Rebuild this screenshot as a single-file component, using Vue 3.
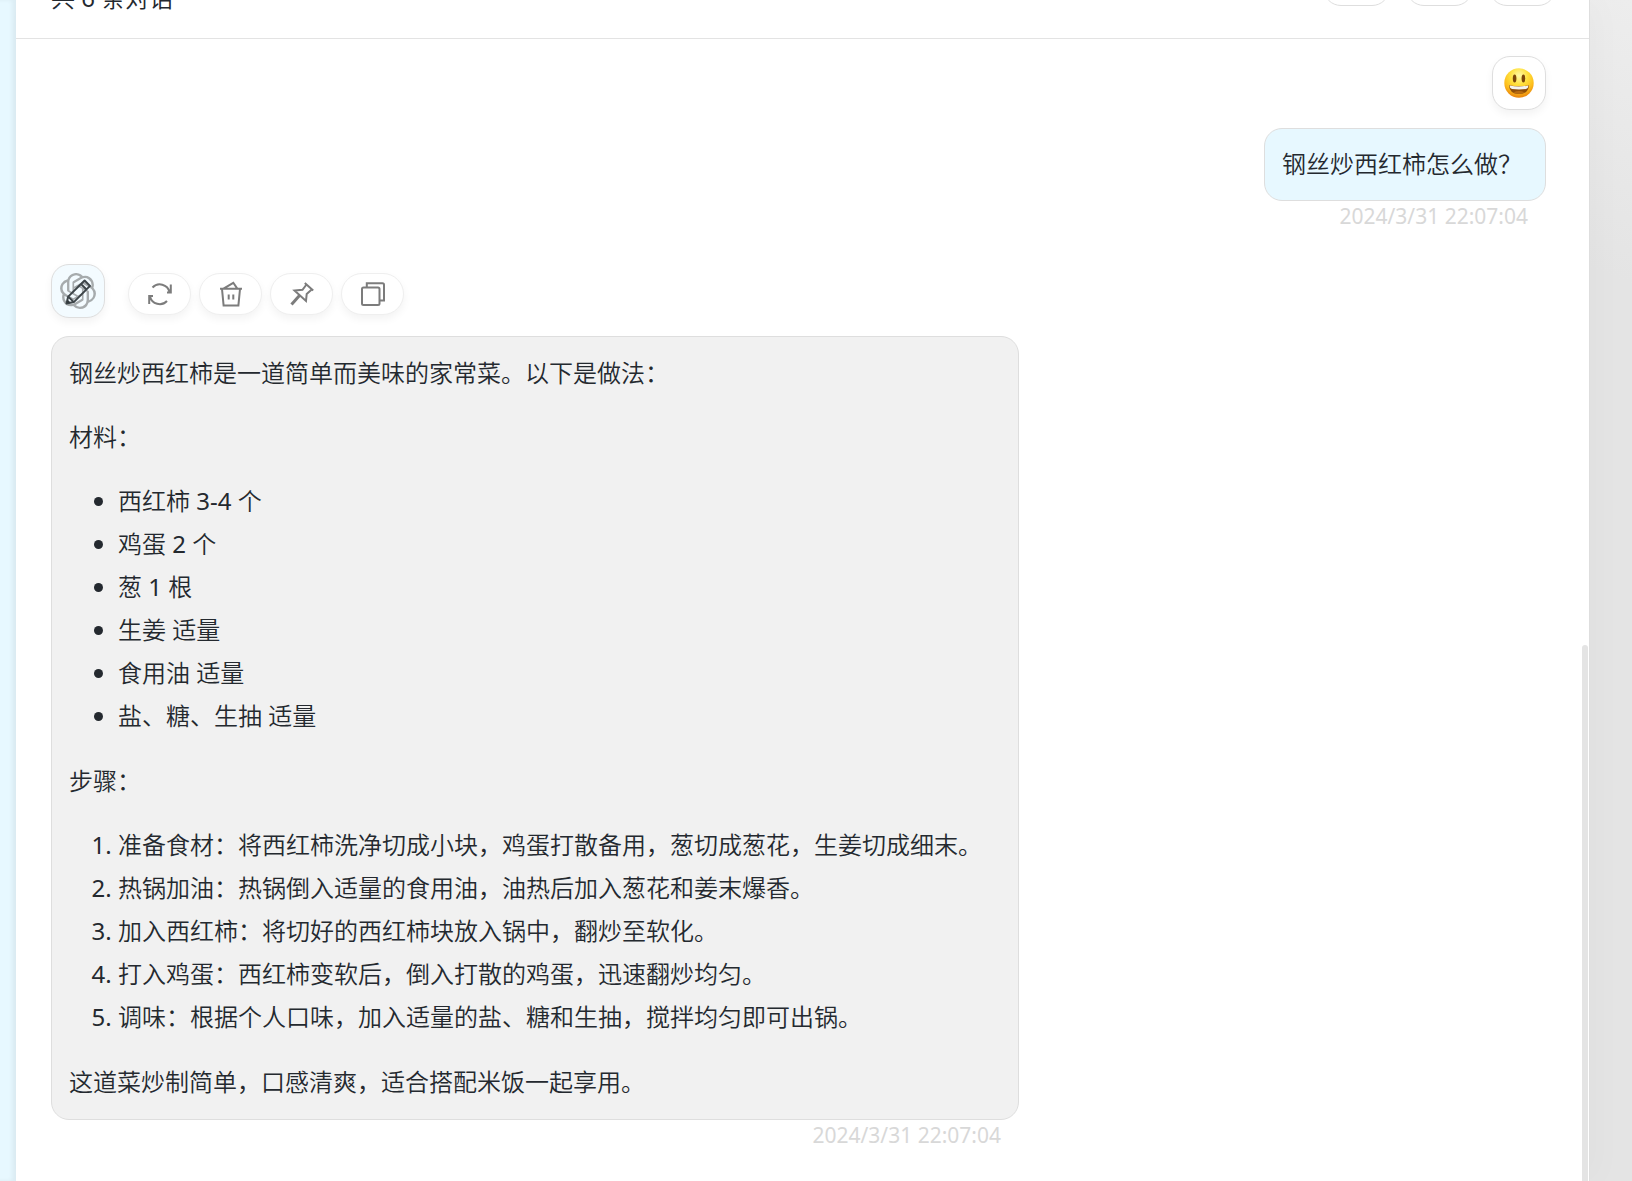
<script setup>
const ingredients = ['西红柿 3-4 个', '鸡蛋 2 个', '葱 1 根', '生姜 适量', '食用油 适量', '盐、糖、生抽 适量']
const steps = [
  '准备食材：将西红柿洗净切成小块，鸡蛋打散备用，葱切成葱花，生姜切成细末。',
  '热锅加油：热锅倒入适量的食用油，油热后加入葱花和姜末爆香。',
  '加入西红柿：将切好的西红柿块放入锅中，翻炒至软化。',
  '打入鸡蛋：西红柿变软后，倒入打散的鸡蛋，迅速翻炒均匀。',
  '调味：根据个人口味，加入适量的盐、糖和生抽，搅拌均匀即可出锅。',
]
const time = '2024/3/31 22:07:04'
const headerActions = ['重命名', '分享', '全屏']
</script>

<template>
  <div class="page">
    <aside class="sidebar"></aside>
    <main class="window">
      <header class="header">
        <span class="subtitle">共 6 条对话</span>
        <div class="header-actions">
          <button v-for="name in headerActions" :key="name" class="header-button" type="button" :aria-label="name"></button>
        </div>
      </header>

      <section class="chat">
        <article class="message user">
          <div class="avatar">
            <svg width="30" height="30" viewBox="0 0 30 30" role="img" aria-label="笑脸">
              <defs>
                <radialGradient id="face" cx=".5" cy=".25" r=".75">
                  <stop offset="0" stop-color="#fff9a8" />
                  <stop offset=".4" stop-color="#ffe03c" />
                  <stop offset=".72" stop-color="#fdbd1c" />
                  <stop offset="1" stop-color="#e8820c" />
                </radialGradient>
              </defs>
              <circle cx="15" cy="15" r="14.7" fill="url(#face)" />
              <ellipse cx="10.6" cy="10.6" rx="1.8" ry="4" fill="#7b4508" />
              <ellipse cx="19.4" cy="10.6" rx="1.8" ry="4" fill="#7b4508" />
              <path d="M5 17.2Q15 19.5 25 17.2Q24.5 26 15 26Q5.500 26 5 17.200Z" fill="#8f4e08" />
              <path d="M5.700 17.400Q15 19.500 24.300 17.400Q24.600 20.500 22 21.100Q15 22 8 21.100Q5.400 20.500 5.700 17.400Z" fill="#f4f3ee" />
              <path d="M9.500 24.200Q15 21.800 20.500 24.200Q18 26 15 26Q12 26 9.500 24.200Z" fill="#b96b10" />
            </svg>
          </div>
          <div class="bubble">
            <p>钢丝炒西红柿怎么做？</p>
          </div>
          <time class="date">{{ time }}</time>
        </article>

        <article class="message">
          <div class="message-head">
            <button class="avatar edit" type="button" aria-label="编辑">
              <svg width="36" height="36" viewBox="0 0 36 36" fill="none">
                <path transform="scale(1.5)" fill="#a6abad"
                  d="M22.2819 9.8211a5.9847 5.9847 0 0 0-.5157-4.9108 6.0462 6.0462 0 0 0-6.5098-2.9A6.0651 6.0651 0 0 0 4.9807 4.1818a5.9847 5.9847 0 0 0-3.9977 2.9 6.0462 6.0462 0 0 0 .7427 7.0966 5.98 5.98 0 0 0 .511 4.9107 6.051 6.051 0 0 0 6.5146 2.9001A5.9847 5.9847 0 0 0 13.2599 24a6.0557 6.0557 0 0 0 5.7718-4.2058 5.9894 5.9894 0 0 0 3.9977-2.9001 6.0557 6.0557 0 0 0-.7475-7.0729zm-9.022 12.6081a4.4755 4.4755 0 0 1-2.8764-1.0408l.1419-.0804 4.7783-2.7582a.7948.7948 0 0 0 .3927-.6813v-6.7369l2.02 1.1686a.071.071 0 0 1 .038.052v5.5826a4.504 4.504 0 0 1-4.4945 4.4944zm-9.6607-4.1254a4.4708 4.4708 0 0 1-.5346-3.0137l.142.0852 4.783 2.7582a.7712.7712 0 0 0 .7806 0l5.8428-3.3685v2.3324a.0804.0804 0 0 1-.0332.0615L9.74 19.9502a4.4992 4.4992 0 0 1-6.1408-1.6464zM2.3408 7.8956a4.485 4.485 0 0 1 2.3655-1.9728V11.6a.7664.7664 0 0 0 .3879.6765l5.8144 3.3543-2.0201 1.1685a.0757.0757 0 0 1-.071 0l-4.8303-2.7865A4.504 4.504 0 0 1 2.3408 7.872zm16.5963 3.8558L13.1038 8.364 15.1192 7.2a.0757.0757 0 0 1 .071 0l4.8303 2.7913a4.4944 4.4944 0 0 1-.6765 8.1042v-5.6772a.79.79 0 0 0-.407-.667zm2.0107-3.0231l-.142-.0852-4.7735-2.7818a.7759.7759 0 0 0-.7854 0L9.409 9.2297V6.8974a.0662.0662 0 0 1 .0284-.0615l4.8303-2.7866a4.4992 4.4992 0 0 1 6.6802 4.66zM8.3065 12.863l-2.02-1.1638a.0804.0804 0 0 1-.038-.0567V6.0742a4.4992 4.4992 0 0 1 7.3757-3.4537l-.142.0805L8.704 5.459a.7948.7948 0 0 0-.3927.6813zm1.0976-2.3654l2.602-1.4998 2.6069 1.4998v2.9994l-2.5974 1.4997-2.6067-1.4997Z" />
                <path d="M6.500 30.500L8.200 23.600L24.600 7.500L30 12.900L13.800 29.100ZM8.200 23.600L13.800 29.100M21 11L26.500 16.500"
                  stroke="#3c4448" stroke-width="2" stroke-linejoin="round" />
                <path d="M6.500 30.500L7.500 26.500L10.500 29.500Z" fill="#333a3e" />
              </svg>
            </button>
            <div class="actions">
              <button class="action" type="button" aria-label="重试">
                <svg width="28" height="28" viewBox="0 0 28 28">
                  <path d="M6.500 7.500A10 10 0 0 1 23.500 12M24.800 4.500V12.500H21M21 21A10 10 0 0 1 4 16.500M3.200 24V16H7" />
                </svg>
              </button>
              <button class="action" type="button" aria-label="删除">
                <svg width="28" height="28" viewBox="0 0 28 28">
                  <path d="M3 8.800H25M5 9L6.600 25.400H21.400L23 9M6.500 8.600L16.300 2.800L20.300 8.600" />
                  <path d="M11.700 14.500V19.500M16.300 14.500V19.500" />
                </svg>
              </button>
              <button class="action" type="button" aria-label="固定">
                <svg width="28" height="28" viewBox="0 0 28 28">
                  <path d="M16.800 3L25.200 10.600M18.500 4.500L14.500 9.800L6.500 10.600L18 21L18.700 14L23.700 9.500" />
                  <path d="M11.500 15.500L3.500 24.500" stroke-width="3" />
                </svg>
              </button>
              <button class="action" type="button" aria-label="复制">
                <svg width="28" height="28" viewBox="0 0 28 28">
                  <rect x="3" y="7.500" width="17.500" height="17.500" rx="1.500" />
                  <path d="M7.800 7.300V3.300H23.500Q25 3.300 25 4.800V20.500H20.800" />
                </svg>
              </button>
            </div>
          </div>
          <div class="bubble answer">
            <p>钢丝炒西红柿是一道简单而美味的家常菜。以下是做法：</p>
            <p>材料：</p>
            <ul>
              <li v-for="item in ingredients" :key="item">{{ item }}</li>
            </ul>
            <p>步骤：</p>
            <ol>
              <li v-for="step in steps" :key="step">{{ step }}</li>
            </ol>
            <p>这道菜炒制简单，口感清爽，适合搭配米饭一起享用。</p>
          </div>
          <time class="date">{{ time }}</time>
        </article>
        <div class="scroll-thumb"></div>
      </section>
    </main>
  </div>
</template>

<style>
body {
  margin: 0;
  background: #e4e4e4;
}
</style>

<style scoped>
.page {
  display: flex;
  height: 100vh;
  overflow: hidden;
  padding-right: 42px;
  box-sizing: border-box;
  background: linear-gradient(200deg, #ededed, #e4e4e4 16%);
  color: #24292f;
  font: 400 24px/37px "Noto Sans", "Noto Sans CJK SC DemiLight", "Noto Sans CJK SC", sans-serif;
}

.sidebar {
  flex: none;
  width: 16px;
  background: #e7f8ff;
  box-shadow: inset -4px 0 4px rgba(0, 0, 0, 0.05);
}

.window {
  flex: 1;
  min-width: 0;
  display: flex;
  flex-direction: column;
  background: #fff;
  border-right: 1px solid #dedede;
  box-shadow: 10px 0 30px rgba(0, 0, 0, 0.02);
}

.header {
  flex: none;
  display: flex;
  justify-content: space-between;
  align-items: flex-end;
  box-sizing: border-box;
  height: 39px;
  padding: 0 33px 22px 35px;
  overflow: hidden;
  border-bottom: 1px solid #e3e3e3;
}

.header-actions {
  display: flex;
  gap: 16px;
  margin-bottom: 10px;
}

.header-button {
  width: 67px;
  height: 54px;
  padding: 0;
  background: #fff;
  border: 1px solid #dedede;
  border-radius: 18px;
}

.chat {
  position: relative;
  flex: 1;
  display: flex;
  flex-direction: column;
  gap: 33px;
  padding: 17px 43px 35px 35px;
}

.message {
  display: flex;
  flex-direction: column;
  align-self: flex-start;
}

.user {
  align-self: flex-end;
  align-items: flex-end;
}

.avatar {
  flex: none;
  display: flex;
  align-items: center;
  justify-content: center;
  box-sizing: border-box;
  width: 54px;
  height: 54px;
  padding: 0;
  background: #fff;
  border: 1px solid #dedede;
  border-radius: 18px;
  box-shadow: 0 4px 9px rgba(0, 0, 0, 0.05);
}

.edit {
  background: #f3fbff;
}

.message-head {
  display: flex;
  align-items: center;
  gap: 23px;
}

.actions {
  display: flex;
  gap: 8px;
  padding-top: 6px;
}

.action {
  display: flex;
  align-items: center;
  justify-content: center;
  box-sizing: border-box;
  width: 63px;
  height: 42px;
  padding: 0;
  background: #fff;
  border: 1px solid #efefef;
  border-radius: 21px;
  box-shadow: 0 4px 9px rgba(0, 0, 0, 0.05);
}

.action svg {
  fill: none;
  stroke: #7c7c7c;
  stroke-width: 2;
}

.bubble {
  box-sizing: border-box;
  margin-top: 18px;
  padding: 16px 23px 18px 17px;
  background: #e7f8ff;
  border: 1px solid #dedede;
  border-radius: 18px;
}

.answer {
  padding: 17px 36px 19px 17px;
  background: #f1f1f1;
}

.bubble p,
.bubble ul,
.bubble ol {
  margin: 0;
}

.bubble p:not(:last-child) {
  margin-bottom: 27px;
}

.bubble ul,
.bubble ol {
  display: flex;
  flex-direction: column;
  gap: 6px;
  margin-bottom: 28px;
  padding-left: 49px;
}

.date {
  align-self: flex-end;
  padding-right: 18px;
  color: #d8d8d8;
  font-size: 21px;
  line-height: 30px;
}

.scroll-thumb {
  position: absolute;
  top: 606px;
  right: 1px;
  bottom: 0;
  width: 6px;
  background: #e4e4e4;
  border-radius: 6px 6px 0 0;
}
</style>
